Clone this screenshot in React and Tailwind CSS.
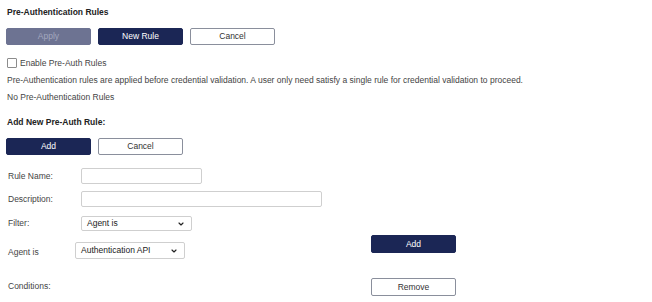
import { ChevronDown } from "lucide-react";

const Btn = ({ children, variant = "primary", className = "" }) => {
  const styles = {
    primary: "bg-[#1b2655] text-white border-[#1b2655]",
    disabled: "bg-[#6d7392] text-[#a3a8bf] border-[#6d7392]",
    outline: "bg-white text-[#333] border-[#8a8f9c]",
  };
  return (
    <button
      className={`w-[85px] h-[17px] rounded-[2px] border text-[8.5px] leading-none flex items-center justify-center ${styles[variant]} ${className}`}
    >
      {children}
    </button>
  );
};

const FakeSelect = ({ value, className = "" }) => (
  <div
    className={`flex items-center justify-between border border-[#cfcfcf] rounded-[2px] bg-white pl-[5px] pr-[6px] text-[8.5px] text-[#222] ${className}`}
  >
    <span>{value}</span>
    <ChevronDown className="w-[8px] h-[8px] text-[#222]" strokeWidth={3.5} />
  </div>
);

export default function App() {
  return (
    <div
      className="w-[652px] h-[302px] bg-white text-[#444] overflow-hidden px-[7px]"
      style={{ fontFamily: '"Liberation Sans", Arial, sans-serif' }}
    >
      {/* Pre-auth rules */}
      <div className="mt-[7px] h-[10px] leading-[10px] text-[8.5px] font-bold text-[#222]">
        Pre-Authentication Rules
      </div>
      <div className="mt-[11px] flex gap-[7px] -ml-[1px]">
        <Btn variant="disabled">Apply</Btn>
        <Btn>New Rule</Btn>
        <Btn variant="outline">Cancel</Btn>
      </div>

      <div className="mt-[13px] h-[10px] flex items-center gap-[3px] text-[8.5px]">
        <span className="w-[10px] h-[10px] border border-[#8c8c8c] rounded-[1px] bg-white" />
        <span>Enable Pre-Auth Rules</span>
      </div>
      <p className="mt-[7px] h-[10px] leading-[10px] text-[8.5px]">
        Pre-Authentication rules are applied before credential validation. A user only need satisfy a single rule for
        credential validation to proceed.
      </p>
      <p className="mt-[7px] h-[10px] leading-[10px] text-[8.5px]">No Pre-Authentication Rules</p>

      {/* Add new rule */}
      <div className="mt-[15px] h-[10px] leading-[10px] text-[8.5px] font-bold text-[#222]">
        Add New Pre-Auth Rule:
      </div>
      <div className="mt-[11px] flex gap-[7px] -ml-[1px]">
        <Btn>Add</Btn>
        <Btn variant="outline">Cancel</Btn>
      </div>

      <div className="mt-[13px] flex items-center text-[8.5px]">
        <span className="w-[74px] pl-[1px]">Rule Name:</span>
        <div className="w-[121px] h-[16px] border border-[#cfcfcf] rounded-[2px]" />
      </div>
      <div className="mt-[7px] flex items-center text-[8.5px]">
        <span className="w-[74px] pl-[1px]">Description:</span>
        <div className="w-[241px] h-[16px] border border-[#cfcfcf] rounded-[2px]" />
      </div>
      <div className="mt-[9px] flex items-center text-[8.5px]">
        <span className="w-[74px] pl-[1px]">Filter:</span>
        <FakeSelect value="Agent is" className="w-[111px] h-[15px]" />
      </div>

      <div className="mt-[4px] flex items-start text-[8.5px]">
        <span className="w-[68px] pl-[1px] mt-[12px] h-[10px] leading-[10px]">Agent is</span>
        <FakeSelect value="Authentication API" className="w-[110px] h-[17px] mt-[7px] pl-[4px]" />
        <Btn className="ml-[186px] h-[18px]">Add</Btn>
      </div>

      <div className="mt-[19px] flex items-start text-[8.5px]">
        <span className="w-[364px] pl-[1px] mt-[3px] h-[10px] leading-[10px]">Conditions:</span>
        <Btn variant="outline" className="h-[18px]">
          Remove
        </Btn>
      </div>
    </div>
  );
}
